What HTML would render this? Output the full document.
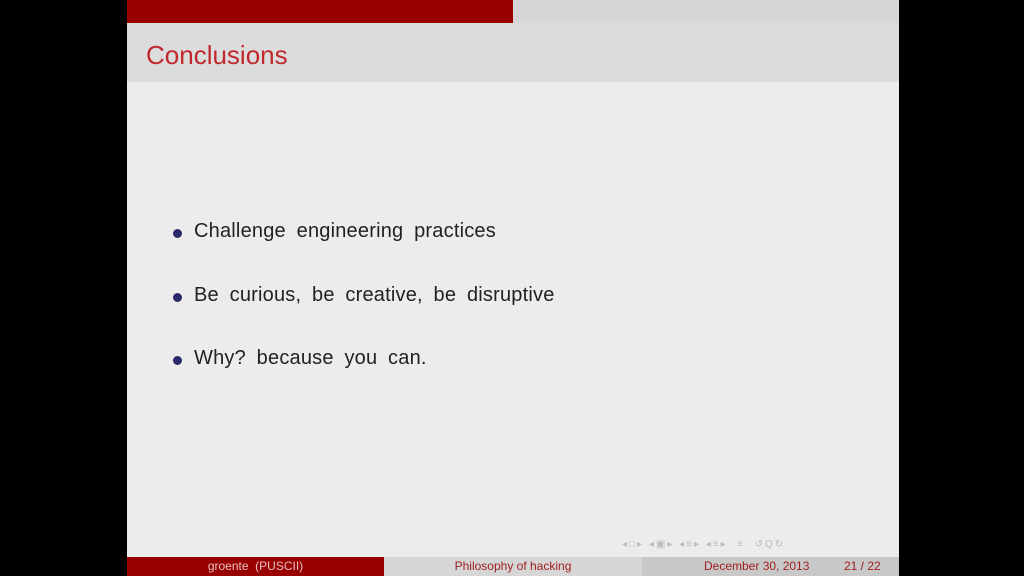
<!DOCTYPE html>
<html><head><style>
body{margin:0;width:1024px;height:576px;background:#000;position:relative;overflow:hidden;font-family:"Liberation Sans",sans-serif}
.s{position:absolute;left:127px;top:0;width:772px;height:576px;background:#ececec}
.tb1{position:absolute;left:0;top:0;width:386px;height:23px;background:#990000}
.tb2{position:absolute;left:386px;top:0;width:386px;height:23px;background:#d6d6d6}
.hd{position:absolute;left:0;top:23px;width:772px;height:59px;background:#dcdcdc}
.hd span{position:absolute;left:19px;top:17px;font-size:26px;color:#c0282d}
.it{position:absolute;left:67px;font-size:20px;color:#222;letter-spacing:0.2px;word-spacing:5px}
.b{position:absolute;left:46px;width:9px;height:9px;border-radius:50%;background:#2a2a6a}
.f{position:absolute;top:557px;height:19px;font-size:12px;line-height:19px;text-align:center}
.nav{position:absolute;top:539px;left:495px;font-size:10px;color:#bbb;letter-spacing:2px}
</style></head><body><div class="s">
<div class="tb1"></div><div class="tb2"></div>
<div class="hd"><span>Conclusions</span></div>
<div class="b" style="top:229px"></div><div class="it" style="top:220px">Challenge engineering practices</div>
<div class="b" style="top:293px"></div><div class="it" style="top:284px">Be curious, be creative, be disruptive</div>
<div class="b" style="top:356px"></div><div class="it" style="top:347px">Why? because you can.</div>
<div class="nav">◂□▸ ◂▣▸ ◂≡▸ ◂≡▸ &nbsp;≡ &nbsp;↺Q↻</div>
<div class="f" style="left:0;width:257px;background:#990000;color:#e8c0c0">groente &nbsp;(PUSCII)</div>
<div class="f" style="left:257px;width:258px;background:#d6d6d6;color:#a02020">Philosophy of hacking</div>
<div class="f" style="left:515px;width:257px;background:#c8c8c8;color:#a02020"><span style="position:absolute;left:62px">December 30, 2013</span><span style="position:absolute;left:202px">21 / 22</span></div>
</div></body></html>
